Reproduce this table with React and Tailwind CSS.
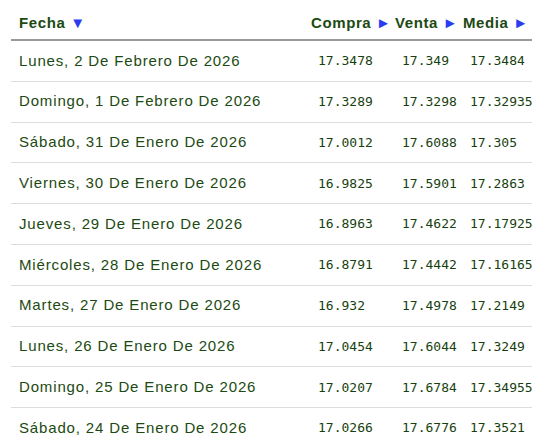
const rows = [
  ["Lunes, 2 De Febrero De 2026", "17.3478", "17.349", "17.3484"],
  ["Domingo, 1 De Febrero De 2026", "17.3289", "17.3298", "17.32935"],
  ["Sábado, 31 De Enero De 2026", "17.0012", "17.6088", "17.305"],
  ["Viernes, 30 De Enero De 2026", "16.9825", "17.5901", "17.2863"],
  ["Jueves, 29 De Enero De 2026", "16.8963", "17.4622", "17.17925"],
  ["Miércoles, 28 De Enero De 2026", "16.8791", "17.4442", "17.16165"],
  ["Martes, 27 De Enero De 2026", "16.932", "17.4978", "17.2149"],
  ["Lunes, 26 De Enero De 2026", "17.0454", "17.6044", "17.3249"],
  ["Domingo, 25 De Enero De 2026", "17.0207", "17.6784", "17.34955"],
  ["Sábado, 24 De Enero De 2026", "17.0266", "17.6776", "17.3521"],
];

const cols = ["w-[296px]", "w-[84px]", "w-[68px]", "w-[73px]"];

export default function App() {
  return (
    <div className="min-h-screen bg-white pl-[11px] font-['Liberation_Sans',Arial,sans-serif] text-[#1c4a12]">
      <div className="w-[521px]">
        {/* Header */}
        <div className="flex h-[41px] items-center border-b-2 border-[#9a9a9a] text-[15px] font-bold tracking-[0.6px]">
          <div className={`${cols[0]} pl-2 pt-[8px]`}>
            Fecha <span className="text-[#2a3cf0]">▼</span>
          </div>
          {["Compra", "Venta", "Media"].map((h, i) => (
            <div key={h} className={`${cols[i + 1]} pl-1 pt-[8px] whitespace-nowrap`}>
              {h} <span className="text-[15px] text-[#2a3cf0]">►</span>
            </div>
          ))}
        </div>

        {/* Rows */}
        {rows.map((r) => (
          <div
            key={r[0]}
            className="flex h-[40.8px] items-center border-b border-[#dddddd]"
          >
            <div className={`${cols[0]} pl-2 text-[15px] tracking-[0.85px]`}>{r[0]}</div>
            {r.slice(1).map((v, i) => (
              <div
                key={i}
                className={`${cols[i + 1]} pl-[11px] whitespace-nowrap font-['DejaVu_Sans_Mono',monospace] text-[13px] text-[#183f0f]`}
              >
                {v}
              </div>
            ))}
          </div>
        ))}
      </div>
    </div>
  );
}
